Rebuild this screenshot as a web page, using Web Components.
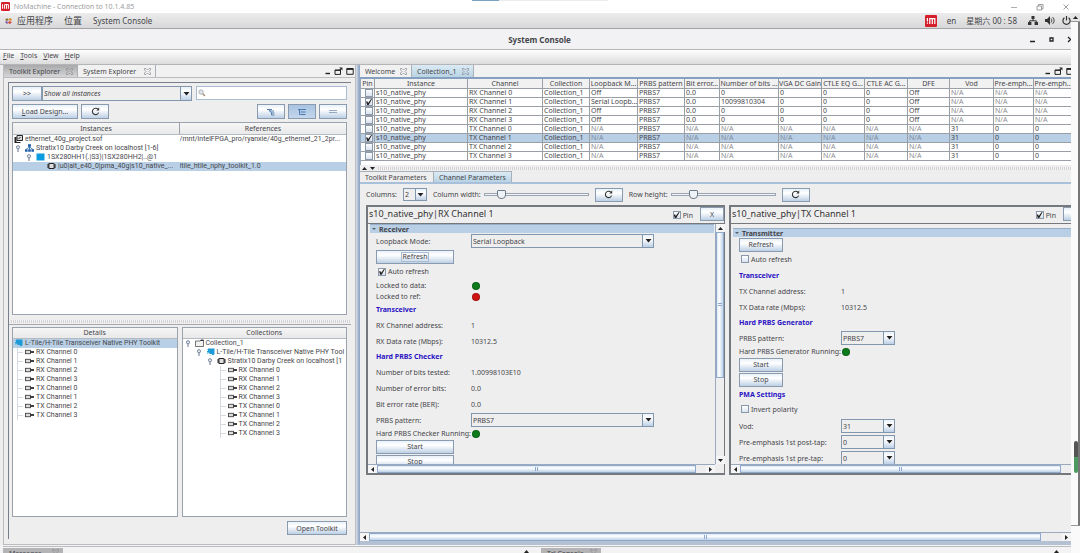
<!DOCTYPE html>
<html lang="zh-CN">
<head>
<meta charset="utf-8">
<title>System Console</title>
<style>
    :root {
        --face: #eeeeee;
        --line: #7a8a99;
        --soft-line: #b8b8bc;
        --select: #b8cfe5;
        --text: #46464a;
        --small: 7px;
        --bar: 8px;
        --title: 9px;
        --button: linear-gradient(#e9f1f9, #ffffff 35%, #bdd0e5);
        --tree-face: Roboto, "Noto Sans", sans-serif;
    }
    body {
        margin: 0;
        height: 100vh;
        display: flex;
        flex-direction: column;
        overflow: hidden;
        background: #fff;
        color: var(--text);
        font: var(--small)/9px "Noto Sans", "DejaVu Sans", "Noto Sans CJK SC", sans-serif;
    }
</style>
</head>
<body>

<viewer-title>NoMachine - Connection to 10.1.4.85</viewer-title>
<remote-screen>
    <desktop-bar></desktop-bar>
    <window-title>System Console</window-title>
    <menu-bar></menu-bar>
    <split-view>
        <dock-panel slot="left">
            <tab-strip slot="tabs" controls>
                <tab-item kind="dark" closable style="--w:74px">Toolkit Explorer</tab-item>
                <tab-item closable style="--w:78px">System Explorer</tab-item>
            </tab-strip>
            <toolkit-explorer></toolkit-explorer>
        </dock-panel>
        <dock-panel slot="right" kind="main">
            <tab-strip slot="tabs" controls kind="main">
                <tab-item closable style="--w:52px">Welcome</tab-item>
                <tab-item kind="blue" closable style="--w:62px">Collection_1</tab-item>
            </tab-strip>
            <channel-table></channel-table>
            <pane-divider arrows></pane-divider>
            <tab-strip kind="inner">
                <tab-item style="--w:74px">Toolkit Parameters</tab-item>
                <tab-item kind="blue" style="--w:78px">Channel Parameters</tab-item>
            </tab-strip>
            <view-controls></view-controls>
            <card-grid>
                <channel-card heading="s10_native_phy|RX Channel 1" kind="rx">
                    <param-section>Receiver</param-section>
                    <param-row label="Loopback Mode:"><combo-box label="Loopback Mode" value="Serial Loopback"></combo-box></param-row>
                    <param-button focused>Refresh</param-button>
                    <param-row><check-box checked>Auto refresh</check-box></param-row>
                    <param-row kind="led" label="Locked to data:"><led-dot></led-dot></param-row>
                    <param-row kind="led" label="Locked to ref:"><led-dot color="#d01414"></led-dot></param-row>
                    <param-group>Transceiver</param-group>
                    <param-row label="RX Channel address:">1</param-row>
                    <param-row label="RX Data rate (Mbps):">10312.5</param-row>
                    <param-group>Hard PRBS Checker</param-group>
                    <param-row label="Number of bits tested:">1.00998103E10</param-row>
                    <param-row label="Number of error bits:">0.0</param-row>
                    <param-row label="Bit error rate (BER):">0.0</param-row>
                    <param-row label="PRBS pattern:"><combo-box label="PRBS pattern" value="PRBS7"></combo-box></param-row>
                    <param-row kind="led" label="Hard PRBS Checker Running:"><led-dot></led-dot></param-row>
                    <param-button>Start</param-button>
                    <param-button>Stop</param-button>
                </channel-card>
                <channel-card heading="s10_native_phy|TX Channel 1" kind="tx">
                    <param-section>Transmitter</param-section>
                    <param-button>Refresh</param-button>
                    <param-row><check-box>Auto refresh</check-box></param-row>
                    <param-group>Transceiver</param-group>
                    <param-row label="TX Channel address:">1</param-row>
                    <param-row label="TX Data rate (Mbps):">10312.5</param-row>
                    <param-group>Hard PRBS Generator</param-group>
                    <param-row label="PRBS pattern:"><combo-box label="PRBS pattern" value="PRBS7"></combo-box></param-row>
                    <param-row kind="led" label="Hard PRBS Generator Running:"><led-dot></led-dot></param-row>
                    <param-button>Start</param-button>
                    <param-button>Stop</param-button>
                    <param-group>PMA Settings</param-group>
                    <param-row><check-box>Invert polarity</check-box></param-row>
                    <param-row label="Vod:"><combo-box label="Vod" value="31"></combo-box></param-row>
                    <param-row label="Pre-emphasis 1st post-tap:"><combo-box label="Pre-emphasis 1st post-tap" value="0"></combo-box></param-row>
                    <param-row label="Pre-emphasis 1st pre-tap:"><combo-box label="Pre-emphasis 1st pre-tap" value="0"></combo-box></param-row>
                </channel-card>
            </card-grid>
            <scroll-bar thumb="97"></scroll-bar>
        </dock-panel>
    </split-view>
    <bottom-tabs></bottom-tabs>
</remote-screen>

<script>
// every icon is drawn on its own small grid
const ICONS = {
    nm: [9, 9, '<rect width="9" height="9" rx="1" fill="#d3202b"/><path d="M1.6 2.2v4.6M3.6 6.8V2.6h3.8v4.2M5.5 2.6v4.2" stroke="#fff" stroke-width="1" fill="none"/>'],
    nmtray: [12, 12, '<rect width="12" height="12" rx="1" fill="#d3202b"/><path d="M2.4 3v3.6M2.4 7.6v1.2M4.8 9V3.6h5V9M7.3 3.6V9" stroke="#fff" stroke-width="1.2" fill="none"/>'],
    apps: [9, 8, '<path d="M1 3l2-2 2 2-2 1z" fill="#8a7a3c"/><path d="M5 1l3 1-1 2-2-1z" fill="#d98a2c"/><path d="M5 4l3 1-2 2-2-1z" fill="#cf4a35"/><path d="M1 5l2-1 1 2-1 1z" fill="#7b4fa0"/>'],
    net: [10, 9, '<path d="M3.5 0h3v3h-3zM0 6h3.4v3H0zM6.6 6H10v3H6.6z" fill="#333"/><path d="M5 3v1.8M1.7 6V4.8h6.6V6" stroke="#333" fill="none"/>'],
    sound: [10, 9, '<path d="M0 3h2l3-3v9L2 6H0z" fill="#333"/><path d="M6 2.5c1 1 1 3 0 4M7.6 1.2c2 2 2 4.600 0 6.600" stroke="#333" fill="none"/>'],
    power: [9, 9, '<path d="M2.400 1.800a3.600 3.600 0 1 0 4.200 0M4.500 0v4.500" stroke="#333" stroke-width="1.200" fill="none"/>'],
    refresh: [9, 9, '<path d="M6.900 2.200A3.200 3.200 0 1 0 7.600 5.600" stroke="#333" stroke-width="1.100" fill="none"/><path d="M5.300 3.400h2.900V.5z" fill="#333"/>'],
    close: [7, 7, '<path d="M.5 .5h1.500l1.500 1.500L5 .5h1.500V2L5 3.500 6.500 5v1.500H5L3.500 5 2 6.500H.5V5L2 3.500.5 2z" stroke="#8b8b90" stroke-width=".7" fill="none"/>'],
    min: [6, 8, '<path d="M.5 6.500h4.500" stroke="#222" stroke-width="1.400"/>'],
    detach: [9, 8, '<path d="M1 3h5.500v4.400H1zM1 3.400h5.500" stroke="#222" fill="none"/><path d="M5 .4h3.400v3L7.300 2.300 6 3.500l-.6-.7L6.400 1.600z" fill="#222"/>'],
    max: [8, 8, '<path d="M.8 1.500h6.400v5.800H.8z" stroke="#222" fill="none"/><path d="M.8 2.200h6.400" stroke="#222" stroke-width="1.400"/>'],
    search: [8, 8, '<circle cx="3" cy="3" r="2.200" fill="#dfe6ee" stroke="#a5a5aa" stroke-width=".8"/><path d="M4.700 4.700L7 7" stroke="#a08a70" stroke-width="1.300"/>'],
    expand: [10, 8, '<path d="M1 1.500h5M3.500 3h4.500M5 5h3.500M5.500 7h3M2.500 1.500L5.500 5v2" stroke="#557fae" stroke-width="1" fill="none"/>'],
    level: [10, 8, '<path d="M1 1.500h8M3.500 4h5M3.500 6.500h5M2.500 1.500v5h1" stroke="#4471a8" stroke-width=".9" fill="none"/>'],
    collapse: [10, 8, '<path d="M1 2.500h8M1 4.500h8" stroke="#8ba0b8" stroke-width=".9"/>'],
    project: [9, 8, '<path d="M3 .5h5.500v5H3z" fill="#ddd" stroke="#222"/><path d="M.5 2h2v5h4v1H.5z" fill="#222"/><path d="M4.500 4l2-2" stroke="#222"/>'],
    board: [9, 8, '<path d="M3 .3h3v2.500H3zM0 5.200h2.600v2.500H0zM3.200 5.200h2.600v2.500H3.200zM6.400 5.200H9v2.500H6.400z" fill="#1d5fa8"/><path d="M4.500 2.500v3M1.300 5.200L4.500 3l3.200 2.200" stroke="#1d5fa8" stroke-width=".8" fill="none"/>'],
    device: [9, 8, '<rect x=".5" y=".5" width="8" height="7" fill="#0b9be0"/>'],
    toolkit: [9, 8, '<path d="M2 .5h6.500v5.500L7 7.500 5.500 6H4L2.500 4.500H1V3h1z" fill="#1c9bd8"/><path d="M1 1.500h1M1 5.500h1.500M4 7v1" stroke="#6dbfe6" stroke-width=".8"/>'],
    chip: [9, 8, '<rect x="1.800" y="1.500" width="5.400" height="5" rx="1" fill="#ddd" stroke="#222" stroke-width="1.200"/><path d="M0 3h1.500M0 5h1.500M7.500 3H9M7.500 5H9" stroke="#222"/>'],
    folder: [9, 8, '<path d="M.5 2h4.500L6 1h2.500v6.500h-8z" fill="#f1f1f1" stroke="#555" stroke-width=".8"/><path d="M5.500 1.400h3" stroke="#222" stroke-width="1"/>'],
    channel: [9, 8, '<rect x=".5" y="2.300" width="5" height="3.400" fill="#ddd" stroke="#444" stroke-width=".9"/><path d="M5.500 4H9" stroke="#111" stroke-width="1.600"/>'],
    handle: [9, 9, '<circle cx="4" cy="3.200" r="1.600" fill="#dfe8f2" stroke="#66758a" stroke-width=".8"/><path d="M4 4.800V8" stroke="#66758a" stroke-width="1"/>'],
    left: [5, 5, '<path d="M4 0v5L1 2.500z" fill="#222"/>'],
    right: [5, 5, '<path d="M1 0v5l3-2.500z" fill="#222"/>'],
    up: [5, 5, '<path d="M0 4h5L2.500 1z" fill="#222"/>'],
    down: [5, 5, '<path d="M0 1h5L2.500 4z" fill="#222"/>'],
    wmin: [8, 8, '<path d="M1 4.500h6" stroke="#999" stroke-width=".8"/>'],
    wmax: [8, 8, '<path d="M1 3h4.500v4H1zM2.500 3V1.500H7V6H5.500" stroke="#888" stroke-width=".8" fill="none"/>'],
    wclose: [8, 8, '<path d="M1.500 1.500l5 5M6.500 1.500l-5 5" stroke="#888" stroke-width=".8"/>']
};

function icon(name) {
    const [w, h, body] = ICONS[name];
    return `<svg class="icon" width="${w}" height="${h}" viewBox="0 0 ${w} ${h}" aria-hidden="true">${body}</svg>`;
}

const BASE = `
    :host, * { box-sizing: border-box; }
    .icon { display: block; flex: none; }
    button, input, select {
        margin: 0; padding: 0; border: 0; background: none;
        font: inherit; color: inherit; border-radius: 0;
    }
    .btn {
        display: flex; align-items: center; justify-content: center;
        border: 1px solid #8a9bb0; background: var(--button);
    }
`;

class UiElement extends HTMLElement {
    constructor() {
        super();
        this.attachShadow({ mode: 'open' });
    }

    connectedCallback() {
        this.shadowRoot.innerHTML = `<style>${BASE}${this.css()}</style>${this.html()}`;
    }

    css() { return ':host { display: block; }'; }
    html() { return '<slot></slot>'; }
}

class ViewerTitle extends UiElement {
    css() {
        return `
            :host { display: flex; align-items: center; gap: 2px; height: 13px; flex: none; padding: 0 10px 0 1px; color: #96969a; font-family: "Open Sans", sans-serif; position: relative; }
            .name { flex: 1; }
            .windows { display: flex; gap: 18px; }
            .handle { position: absolute; left: 472px; top: 0; width: 136px; height: 1px; background: linear-gradient(90deg, #7ba3c4 27px, #ececec 27px); }
        `;
    }
    html() {
        return `${icon('nm')}<span class="name">&nbsp;<slot></slot></span><span class="handle"></span>
            <div class="windows">${icon('wmin')}${icon('wmax')}${icon('wclose')}</div>`;
    }
}

class RemoteScreen extends UiElement {
    css() {
        return `
            :host { display: flex; flex: 1; min-height: 0; }
            .screen { flex: 1; min-width: 0; display: flex; flex-direction: column; }
            .edge { flex: none; width: 9px; display: flex; flex-direction: column; background: #fafafa; }
            .top { height: 9px; background: #e4e4e4; border-bottom: 1px solid #999; display: grid; place-items: center; }
            .rail { flex: 1; border-right: 2px solid #77777a; border-bottom: 1px solid #999; display: flex; flex-direction: column; align-items: flex-end; justify-content: flex-end; }
            .level { width: 4px; height: 32px; border-radius: 2px; background: linear-gradient(#555 50%, #4d9a61 50%); }
            .rest { height: 52px; }
            .foot { height: 27px; }
        `;
    }
    html() {
        return `<div class="screen"><slot></slot></div>
            <div class="edge"><div class="top">${icon('up')}</div>
            <div class="rail"><div class="level"></div><div class="rest"></div></div><div class="foot"></div></div>`;
    }
}

class DesktopBar extends UiElement {
    css() {
        return `
            :host { display: flex; align-items: center; height: 16px; flex: none; padding-left: 4px; border-bottom: 1px solid #a4a4a6; background: linear-gradient(#ececec, #d8d8da); font-size: var(--bar); line-height: 12px; }
            .cjk { font-size: var(--title); font-family: "Noto Sans", "Noto Sans CJK SC", sans-serif; }
            .menu { display: flex; gap: 11px; margin-left: 4px; flex: 1; }
            .tray { display: flex; align-items: center; gap: 7px; }
            .tray .date { margin: 0 4px 0 3px; font-family: "Noto Sans", "Noto Sans CJK SC", sans-serif; white-space: nowrap; }
            .tray .lang { margin-left: 3px; }
        `;
    }
    html() {
        return `${icon('apps')}
            <nav class="menu"><span class="cjk">应用程序</span><span class="cjk">位置</span><span>System Console</span></nav>
            <div class="tray">${icon('nmtray')}<span class="lang">en</span><span class="date">星期六 00 : 58</span>
            ${icon('net')}${icon('sound')}${icon('power')}</div>`;
    }
}

class WindowTitle extends UiElement {
    css() {
        return `
            :host { display: grid; grid-template-columns: 1fr auto 1fr; align-items: center; height: 21px; flex: none; border-bottom: 1px solid #b5b5b8; background: #f2f1f4; font-weight: bold; font-size: var(--bar); }
            .name { grid-column: 2; margin-left: 8px; }
            .windows { justify-self: end; }
        `;
    }
    html() {
        return `<span class="name"><slot></slot></span>
            <svg class="windows" width="44" height="9" viewBox="0 0 44 9" fill="none" stroke="#222" stroke-width="1.300"><path d="M3 6.500h5M23 3h3v3h-3zM41 2l2.500 2.500L41 7"/></svg>`;
    }
}

class MenuBar extends UiElement {
    css() {
        return `
            :host { display: flex; gap: 6px; height: 15px; flex: none; padding-left: 3px; border-bottom: 1px solid #b5b5b8; background: linear-gradient(#ffffff, #dcdcdc); }
            button { height: 10px; line-height: 9px; }
        `;
    }
    html() {
        return ['File', 'Tools', 'View', 'Help'].map(n => `<button><u>${n[0]}</u>${n.slice(1)}</button>`).join('');
    }
}

class SplitView extends UiElement {
    css() {
        return `
            :host { display: grid; grid-template-columns: 353px 3px minmax(0, 1fr); flex: 1; min-height: 0; padding-left: 3px; background: var(--face); }
            .bar { background: linear-gradient(90deg, #dfe3ea, #93a9c6); }
            ::slotted(*) { min-height: 0; }
        `;
    }
    html() {
        return '<slot name="left"></slot><div class="bar"></div><slot name="right"></slot>';
    }
}

class DockPanel extends UiElement {
    css() {
        return `
            :host { display: flex; flex-direction: column; border: 1px solid #bcbcc0; border-top: 0; overflow: hidden; }
            :host([kind="main"]) { border: 0; border-left: 1px solid #93a9c6; border-bottom: 4px solid #b4c1d3; }
        `;
    }
    html() { return '<slot name="tabs"></slot><slot></slot>'; }
}

class TabStrip extends UiElement {
    css() {
        return `
            :host { display: flex; height: 13px; flex: none; border-bottom: 1px solid #bcbcc0; background: #f1f1f1; }
            :host([kind="main"]) { border-bottom: 2px solid #86a0bf; height: 14px; }
            :host([kind="inner"]) { border-bottom: 2px solid #a9c0da; height: 13px; background: var(--face); }
            :host([kind="inner"]) ::slotted(tab-item) { border-top: 1px solid #a9b0b8; }
            .controls { margin-left: auto; display: flex; gap: 3px; align-items: center; padding-right: 1px; }
            :host([kind="main"]) .controls { margin-right: -4px; }
        `;
    }
    html() {
        const controls = this.hasAttribute('controls') ? `<div class="controls">${icon('min')}${icon('detach')}${icon('max')}</div>` : '';
        return `<slot></slot>${controls}`;
    }
}

class TabItem extends UiElement {
    css() {
        return `
            :host { display: flex; align-items: center; justify-content: space-between; width: var(--w); padding: 0 4px 0 5px; border-right: 1px solid #a9b0b8; white-space: nowrap; }
            :host([kind="dark"]) { background: linear-gradient(#a9a9ac, #d6d6d8); }
            :host([kind="blue"]) { background: linear-gradient(#dcebf5, #b8d3e4); }
        `;
    }
    html() {
        return `<slot></slot>${this.hasAttribute('closable') ? icon('close') : ''}`;
    }
}

class PaneDivider extends UiElement {
    css() {
        return `
            :host { display: flex; gap: 3px; height: 6px; flex: none; align-items: center; padding-left: 2px; }
            .dots { flex: 1; height: 3px; background: repeating-linear-gradient(90deg, #d2d2d5 0 1px, #f4f4f4 1px 2px); }
        `;
    }
    html() {
        return `${this.hasAttribute('arrows') ? icon('up') + icon('down') : ''}<div class="dots"></div>`;
    }
}

class ComboBox extends UiElement {
    css() {
        return `
            :host { display: block; position: relative; height: 14px; }
            select { appearance: none; width: 100%; height: 100%; border: 1px solid #8296ae; padding-left: 1px; background: var(--face); display: block; }
            :host([kind="italic"]) select { font-style: italic; }
            .arrow { position: absolute; right: 0; top: 0; bottom: 0; width: 12px; border: 1px solid #8296ae; background: var(--button); pointer-events: none; display: grid; place-items: center; }
        `;
    }
    html() {
        return `<select aria-label="${this.getAttribute('label')}"><option>${this.getAttribute('value')}</option></select>
            <span class="arrow"><svg width="7" height="4" viewBox="0 0 7 4"><path d="M.5 0h6L3.500 3.500z" fill="#222"/></svg></span>`;
    }
}

class CheckBox extends UiElement {
    css() {
        return `
            :host { display: inline-flex; }
            label { display: flex; align-items: center; gap: 2px; white-space: nowrap; }
            input { appearance: none; width: 8px; height: 8px; border: 1px solid #8a98aa; background: linear-gradient(#fff, #d8e2ee); display: grid; place-items: center; }
            input:checked::before { content: ""; width: 6px; height: 6px; background: #222; clip-path: polygon(0 40%, 25% 40%, 35% 65%, 85% 0, 100% 0, 45% 100%, 20% 100%); }
        `;
    }
    html() {
        return `<label><input type="checkbox" ${this.hasAttribute('checked') ? 'checked' : ''}><slot></slot></label>`;
    }
}

class LedDot extends UiElement {
    css() {
        return `:host { display: block; width: 8px; height: 8px; margin-left: 1px; border-radius: 50%; background: ${this.getAttribute('color') || '#0d7a1c'}; border: 1px solid #0003; }`;
    }
}

class ScrollBar extends UiElement {
    css() {
        const upright = this.hasAttribute('upright');
        return `
            :host { display: flex; flex-direction: ${upright ? 'column' : 'row'}; flex: none; ${upright ? 'width' : 'height'}: 9px; border: 0 solid #9aa9bb; border-${upright ? 'left' : 'top'}-width: 1px; background: var(--face); }
            button { width: 9px; height: 8px; display: grid; place-items: center; flex: none; background: #f5f5f5; }
            .track { flex: 1; display: flex; flex-direction: inherit; }
            .thumb { flex: none; ${upright ? 'height' : 'width'}: ${this.getAttribute('thumb')}%; border: 1px solid #8fa9cc; background: linear-gradient(${upright ? '90deg' : '180deg'}, #dbe7f4, #fff 35%, #bfd2e8); display: grid; place-items: center; }
            .grip { ${upright ? 'width: 4px; height: 3px' : 'width: 3px; height: 4px'}; border: solid #8fa9cc; border-width: ${upright ? '1px 0' : '0 1px'}; }
        `;
    }
    html() {
        const names = this.hasAttribute('upright') ? ['up', 'down'] : ['left', 'right'];
        return `<button aria-label="${names[0]}">${icon(names[0])}</button>
            <div class="track"><div class="thumb"><span class="grip"></span></div></div>
            <button aria-label="${names[1]}">${icon(names[1])}</button>`;
    }
}

class TreeNode extends UiElement {
    css() {
        const level = Number(this.getAttribute('level'));
        return `
            :host { display: flex; align-items: center; height: 9px; line-height: 9px; white-space: nowrap; overflow: hidden; padding-left: ${level ? (level - 1) * 11 : 0}px; }
            :host([selected]) { background: var(--select); }
            .slot { width: 11px; height: 9px; flex: none; display: flex; align-items: center; }
            .stub { border-left: 1px solid #d5dae0; background: linear-gradient(#d5dae0, #d5dae0) 0 4px / 5px 1px no-repeat; width: 7px; height: 9px; margin-left: 4px; }
            .icon { margin: 0 2px 0 1px; }
            .slot .icon { margin: 0 0 0 1px; }
        `;
    }
    html() {
        let lead = '';
        if (Number(this.getAttribute('level'))) {
            const inner = this.hasAttribute('handle') ? icon('handle') : this.hasAttribute('stub') ? '<i class="stub"></i>' : '';
            lead = `<span class="slot">${inner}</span>`;
        }
        return `${lead}${icon(this.getAttribute('icon'))}<slot></slot>`;
    }
}

class TreeBox extends UiElement {
    css() {
        return `
            :host { display: block; flex: 1; min-width: 0; border: 1px solid #9aa3ad; background: #fff; overflow: hidden; }
            .head { height: 11px; line-height: 10px; text-align: center; background: linear-gradient(#f6f6f6, #e9e9ea); border-bottom: 1px solid #b4bac2; }
            ::slotted(tree-node) { font-family: var(--tree-face); }
        `;
    }
    html() { return `<div class="head">${this.getAttribute('heading')}</div><slot></slot>`; }
}

const CHANNELS = ['RX Channel 0', 'RX Channel 1', 'RX Channel 2', 'RX Channel 3', 'TX Channel 0', 'TX Channel 1', 'TX Channel 2', 'TX Channel 3'];

class ToolkitExplorer extends UiElement {
    css() {
        return `
            :host { display: flex; flex-direction: column; flex: 1; min-height: 0; margin: 4px 4px 5px; border: solid #77808a; border-width: 1px 0 0 1px; padding: 3px 4px 4px 3px; }
            .row { display: flex; gap: 3px; height: 15px; flex: none; margin-bottom: 3px; }
            .pick { display: flex; width: 180px; margin-right: 1px; }
            .pick .btn { width: 30px; }
            combo-box { flex: 1; height: 15px; }
            .search { flex: 1; display: flex; align-items: center; gap: 2px; padding: 0 1px; border: 1px solid #a9bdd3; background: #fff; height: 14px; }
            .search input { flex: 1; min-width: 0; height: 10px; outline: 0; }
            .load { width: 66px; }
            .tool { width: 28px; }
            .push { margin-left: auto; }
            .on { background: linear-gradient(#a9c3e2, #c3d7ec); }
            .tree { flex: 1; min-height: 0; border: 1px solid #9aa3ad; background: #fff; }
            table { width: 100%; table-layout: fixed; border-collapse: collapse; }
            th { height: 11px; padding: 0; font-weight: normal; line-height: 9px; background: linear-gradient(#f6f6f6, #e9e9ea); border-bottom: 1px solid #b4bac2; }
            th + th { border-left: 1px solid #9aa3ad; }
            td { padding: 0; height: 9px; line-height: 9px; white-space: nowrap; overflow: hidden; font-family: var(--tree-face); }
            tr.sel td { background: var(--select); }
            pane-divider { margin: 4px -4px 1px -3px; border-bottom: 1px solid #a8a8ac; }
            .pair { display: flex; gap: 4px; flex: 1; min-height: 0; margin: 1px 0 4px; }
            .open { width: 60px; height: 14px; align-self: flex-end; flex: none; }
        `;
    }
    html() {
        const leaves = level => CHANNELS.map(c => `<tree-node level="${level}" stub icon="channel">${c}</tree-node>`).join('');
        return `
            <div class="row">
                <div class="pick"><button class="btn">&gt;&gt;</button><combo-box kind="italic" label="Instance filter" value="Show all instances"></combo-box></div>
                <label class="search">${icon('search')}<input type="text" aria-label="Search"></label>
            </div>
            <div class="row">
                <button class="btn load"><span><u>L</u>oad Design...</span></button>
                <button class="btn tool" aria-label="Reload">${icon('refresh')}</button>
                <button class="btn tool push" aria-label="Expand">${icon('expand')}</button>
                <button class="btn tool on" aria-label="Levels">${icon('level')}</button>
                <button class="btn tool" aria-label="Collapse">${icon('collapse')}</button>
            </div>
            <div class="tree"><table>
                <tr><th>Instances</th><th>References</th></tr>
                <tr><td><tree-node level="0" icon="project">ethernet_40g_project.sof</tree-node></td><td>/mnt/intelFPGA_pro/ryanxie/40g_ethernet_21_2pr...</td></tr>
                <tr><td><tree-node level="1" handle icon="board">Stratix10 Darby Creek on localhost [1-6]</tree-node></td><td></td></tr>
                <tr><td><tree-node level="2" handle icon="device">1SX280HH1(.|S3)|1SX280HH2|..@1</tree-node></td><td></td></tr>
                <tr class="sel"><td><tree-node level="3" icon="chip">|u0|alt_e40_0|pma_40g|s10_native_...</tree-node></td><td>ltile_htile_nphy_toolkit_1.0</td></tr>
            </table></div>
            <pane-divider></pane-divider>
            <div class="pair">
                <tree-box heading="Details">
                    <tree-node level="0" selected icon="toolkit">L-Tile/H-Tile Transceiver Native PHY Toolkit</tree-node>
                    ${leaves(1)}
                </tree-box>
                <tree-box heading="Collections">
                    <tree-node level="1" handle icon="folder">Collection_1</tree-node>
                    <tree-node level="2" handle icon="toolkit">L-Tile/H-Tile Transceiver Native PHY Tool</tree-node>
                    <tree-node level="3" handle icon="chip">Stratix10 Darby Creek on localhost [1</tree-node>
                    ${leaves(4)}
                </tree-box>
            </div>
            <button class="btn open">Open Toolkit</button>`;
    }
}

const COLUMNS = [
    ['Pin', 14], ['Instance', 93], ['Channel', 75], ['Collection', 47], ['Loopback M...', 48], ['PRBS pattern', 47], ['Bit error...', 35],
    ['Number of bits ...', 59], ['VGA DC Gain', 43], ['CTLE EQ G...', 43], ['CTLE AC G...', 43], ['DFE', 42], ['Vod', 44], ['Pre-emph...', 40], ['Pre-emph..', 37]
];

class ChannelTable extends UiElement {
    css() {
        return `
            :host { display: block; flex: none; overflow: hidden; background: #fff; padding-bottom: 4px; border-left: 1px solid #9aa9bb; }
            table { width: 100%; table-layout: fixed; border-collapse: separate; border-spacing: 0; }
            th, td { height: 9px; padding: 0 0 0 1px; line-height: 8px; border: 0 solid #9a9fa6; border-width: 0 1px 1px 0; white-space: nowrap; overflow: hidden; text-align: left; font-weight: normal; }
            th { height: 10px; padding: 0; line-height: 9px; text-align: center; background: #f1f1f1; }
            th:last-child, td:last-child { border-right: 0; }
            td.na { color: #8c8c90; }
            tr.sel td { background: var(--select); }
            tr.sel td.na { color: #7f8b9c; }
            check-box { display: block; height: 8px; padding-left: 3px; }
        `;
    }
    html() {
        const na = 'N/A';
        const rows = CHANNELS.map((name, i) => {
            const pinned = name.endsWith('1');
            const rest = i < 4
                ? [pinned ? 'Serial Loopb...' : 'Off', 'PRBS7', '0.0', pinned ? '10099810304' : '0', '0', '0', '0', 'Off', na, na, na]
                : [na, 'PRBS7', na, na, na, na, na, na, '31', '0', '0'];
            const cells = ['s10_native_phy', name, 'Collection_1', ...rest]
                .map(c => `<td${c === na ? ' class="na"' : ''}>${c}</td>`).join('');
            return `<tr${i === 5 ? ' class="sel"' : ''}><td><check-box ${pinned ? 'checked' : ''}></check-box></td>${cells}</tr>`;
        }).join('');
        const cols = COLUMNS.map(c => `<col style="width:${c[1]}px">`).join('');
        return `<table><colgroup>${cols}</colgroup>
            <tr>${COLUMNS.map(c => `<th>${c[0]}</th>`).join('')}</tr>${rows}</table>`;
    }
}

class ViewControls extends UiElement {
    css() {
        return `
            :host { display: flex; align-items: center; gap: 6px; height: 21px; flex: none; padding-left: 6px; white-space: nowrap; }
            label { display: flex; align-items: center; gap: 3px; }
            combo-box { width: 24px; height: 13px; }
            .btn { width: 28px; height: 14px; }
            input { appearance: none; width: 105px; height: 11px; }
            input::-webkit-slider-runnable-track { height: 3px; border: 1px solid #99a5b3; background: #f4f4f4; }
            input::-webkit-slider-thumb { appearance: none; width: 9px; height: 9px; margin-top: -4px; border: 1px solid #6f7a88; border-radius: 1px 1px 4px 4px; background: #eef3f8; }
        `;
    }
    html() {
        return `<span>Columns:</span><combo-box label="Columns" value="2"></combo-box>
            <label>Column width: <input type="range" min="0" max="100" value="13"></label>
            <button class="btn" aria-label="Reset width">${icon('refresh')}</button>
            <label>Row height: <input type="range" min="0" max="100" value="18"></label>
            <button class="btn" aria-label="Reset height">${icon('refresh')}</button>`;
    }
}

class CardGrid extends UiElement {
    css() {
        return `
            :host { display: grid; grid-template-columns: repeat(2, 359px); grid-auto-rows: 270px; gap: 4px; flex: 1; min-height: 0; padding-left: 6px; overflow: hidden; align-content: start; }
        `;
    }
}

class ChannelCard extends UiElement {
    css() {
        return `
            :host { --value: 95px; --button-width: 78px; --combo: 183px; display: flex; flex-direction: column; min-height: 0; border: 2px solid #75787d; border-width: 2px 1px 2px 2px; }
            :host([kind="tx"]) { --value: 102px; --button-width: 44px; --combo: 54px; }
            header { display: flex; align-items: center; height: 17px; flex: none; border-bottom: 1px solid #75787d; padding-left: 1px; gap: 7px; }
            h2 { flex: 1; margin: 0; font-size: var(--title); line-height: 12px; font-weight: normal; color: #333; padding-bottom: 3px; white-space: pre; }
            .btn { width: 24px; height: 14px; align-self: flex-start; }
            .view { display: flex; flex: 1; min-height: 0; }
            .body { flex: 1; min-width: 0; overflow: hidden; padding-left: 2px; }
            :host([kind="tx"]) .body { padding-top: 4px; }
            .foot { display: flex; }
            .foot scroll-bar { flex: 1; }
            .corner { width: 9px; }
        `;
    }
    html() {
        const rx = this.getAttribute('kind') === 'rx';
        return `<header><h2>${this.getAttribute('heading')}</h2><check-box checked>Pin</check-box><button class="btn">X</button></header>
            <div class="view"><div class="body"><slot></slot></div>${rx ? '<scroll-bar upright thumb="65"></scroll-bar>' : ''}</div>
            <div class="foot"><scroll-bar thumb="${rx ? 97 : 95}"></scroll-bar>${rx ? '<div class="corner"></div>' : ''}</div>`;
    }
}

class ParamSection extends UiElement {
    css() {
        return `
            :host { display: flex; align-items: center; gap: 3px; height: 9px; padding-left: 2px; margin-right: 1px; background: var(--select); border-top: 1px solid #98adc6; font-weight: bold; }
            .icon { opacity: .7; }
        `;
    }
    html() { return `<svg class="icon" width="4" height="3" viewBox="0 0 4 3"><path d="M0 0h4L2 2z" fill="#333"/></svg><slot></slot>`; }
}

class ParamGroup extends UiElement {
    css() {
        return ':host { display: block; height: 15px; line-height: 15px; padding-left: 6px; color: #2a12c4; font-weight: bold; }';
    }
}

class ParamRow extends UiElement {
    css() {
        return `
            :host { display: grid; grid-template-columns: var(--value) 1fr; align-items: center; height: 16px; padding-left: 6px; white-space: nowrap; }
            :host([kind="led"]) { height: 11px; }
            ::slotted(combo-box) { width: var(--combo); }
            ::slotted(check-box) { padding-left: 2px; }
        `;
    }
    html() {
        const label = this.getAttribute('label');
        return `${label ? `<span>${label}</span>` : ''}<span><slot></slot></span>`;
    }
}

class ParamButton extends UiElement {
    css() {
        return `
            :host { display: flex; align-items: center; height: 15px; padding-left: 6px; }
            .btn { width: var(--button-width); height: 14px; }
            :host([focused]) span { outline: 1px solid #a9bdd3; line-height: 8px; }
        `;
    }
    html() { return '<button class="btn"><span><slot></slot></span></button>'; }
}

class BottomTabs extends UiElement {
    css() {
        return `
            :host { display: grid; grid-template-columns: 538px 1fr; height: 8px; flex: none; padding: 1px 0 0 3px; background: #f3f3f3; overflow: hidden; }
            .strip { display: flex; border-top: 1px solid #bcbcc0; padding-top: 1px; }
            .tab { display: flex; align-items: flex-start; justify-content: space-between; width: 60px; padding: 1px 4px 0 6px; background: #b4b4b7; white-space: nowrap; }
            .strip .up { margin: 1px 12px 0 auto; }
        `;
    }
    html() {
        return ['Messages', 'Tcl Console'].map(n => `<div class="strip"><div class="tab"><span>${n}</span>${icon('close')}</div><span class="up">${icon('up')}</span></div>`).join('');
    }
}

customElements.define('viewer-title', ViewerTitle);
customElements.define('remote-screen', RemoteScreen);
customElements.define('desktop-bar', DesktopBar);
customElements.define('window-title', WindowTitle);
customElements.define('menu-bar', MenuBar);
customElements.define('split-view', SplitView);
customElements.define('dock-panel', DockPanel);
customElements.define('tab-strip', TabStrip);
customElements.define('tab-item', TabItem);
customElements.define('pane-divider', PaneDivider);
customElements.define('combo-box', ComboBox);
customElements.define('check-box', CheckBox);
customElements.define('led-dot', LedDot);
customElements.define('scroll-bar', ScrollBar);
customElements.define('tree-node', TreeNode);
customElements.define('tree-box', TreeBox);
customElements.define('toolkit-explorer', ToolkitExplorer);
customElements.define('channel-table', ChannelTable);
customElements.define('view-controls', ViewControls);
customElements.define('card-grid', CardGrid);
customElements.define('channel-card', ChannelCard);
customElements.define('param-section', ParamSection);
customElements.define('param-group', ParamGroup);
customElements.define('param-row', ParamRow);
customElements.define('param-button', ParamButton);
customElements.define('bottom-tabs', BottomTabs);
</script>
</body>
</html>
